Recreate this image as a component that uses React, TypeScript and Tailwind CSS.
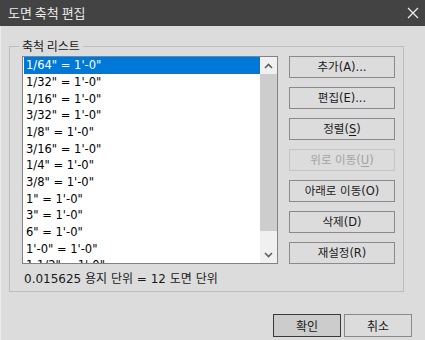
import React from "react";

const scales = [
  '1/64" = 1\'-0"',
  '1/32" = 1\'-0"',
  '1/16" = 1\'-0"',
  '3/32" = 1\'-0"',
  '1/8" = 1\'-0"',
  '3/16" = 1\'-0"',
  '1/4" = 1\'-0"',
  '3/8" = 1\'-0"',
  '1" = 1\'-0"',
  '3" = 1\'-0"',
  '6" = 1\'-0"',
  '1\'-0" = 1\'-0"',
  '1 1/2" = 1\'-0"',
];

const kr = { fontFamily: '"Noto Sans CJK KR", sans-serif' };
const lat = { fontFamily: '"DejaVu Sans", "Noto Sans CJK KR", sans-serif' };

function Btn({ children, disabled }: { children: React.ReactNode; disabled?: boolean }) {
  return (
    <div
      className={
        "h-[22px] w-[106px] flex items-center justify-center border text-[11.5px] leading-[16px] " +
        (disabled ? "border-[#c4c4c4] text-[#a3a3a3]" : "border-[#8a8a8a] text-[#1a1a1a]")
      }
      style={lat}
    >
      {children}
    </div>
  );
}

export default function App() {
  return (
    <div className="w-[425px] h-[340px] bg-[#dcdcdc] flex flex-col overflow-hidden" style={kr}>
      <div className="h-[26px] bg-[#434343] flex items-center justify-between pl-[8px] pr-[5px] shrink-0">
        <span className="text-[13px] leading-[18px] text-[#e8e8e8]" style={kr}>도면 축척 편집</span>
        <svg width="12" height="12" viewBox="0 0 12 12" className="mr-[1px]">
          <path d="M1 1 L11 11 M11 1 L1 11" stroke="#f0f0f0" strokeWidth="1.2" />
        </svg>
      </div>
      <div className="flex-1 flex flex-col border-l border-[#ececec]">
        <div className="relative ml-[8px] mt-[20px] w-[395px] h-[246px] border border-[#bdbdbd] pl-[12px] pt-[9px] shrink-0">
          <span className="absolute left-[9px] top-[-9px] bg-[#dcdcdc] px-[3px] text-[12px] leading-[16px] text-[#1a1a1a]" style={kr}>
            축척 리스트
          </span>
          <div className="flex">
            <div className="w-[256px] h-[208px] border border-[#828282] bg-white flex overflow-hidden">
              <div className="flex-1 flex flex-col pl-[1px] overflow-hidden">
                {scales.map((s, i) => (
                  <div
                    key={i}
                    className={
                      "h-[16.67px] shrink-0 flex items-center pl-[2px] text-[11.5px] leading-[16px] " +
                      (i === 0 ? "bg-[#0078d7] text-white" : "text-black")
                    }
                    style={lat}
                  >
                    {s}
                  </div>
                ))}
              </div>
              <div className="w-[17px] bg-[#f0f0f0] flex flex-col shrink-0">
                <div className="h-[17px] flex items-center justify-center shrink-0">
                  <svg width="9" height="6" viewBox="0 0 9 6">
                    <path d="M1 5 L4.5 1.5 L8 5" stroke="#606060" strokeWidth="1.6" fill="none" />
                  </svg>
                </div>
                <div className="h-[157px] bg-[#cdcdcd] shrink-0" />
                <div className="flex-1" />
                <div className="h-[17px] flex items-center justify-center shrink-0">
                  <svg width="9" height="6" viewBox="0 0 9 6">
                    <path d="M1 1 L4.5 4.5 L8 1" stroke="#606060" strokeWidth="1.6" fill="none" />
                  </svg>
                </div>
              </div>
            </div>
            <div className="ml-[11px] flex flex-col gap-[9px]">
              <Btn>추가(A)...</Btn>
              <Btn>편집(E)...</Btn>
              <Btn>
                정렬(<span className="underline underline-offset-2">S</span>)
              </Btn>
              <Btn disabled>
                위로 이동(<span className="underline underline-offset-2">U</span>)
              </Btn>
              <Btn>아래로 이동(O)</Btn>
              <Btn>삭제(D)</Btn>
              <Btn>재설정(R)</Btn>
            </div>
          </div>
          <div className="mt-[7px] pl-[2px] text-[12px] leading-[16px] text-[#1a1a1a]" style={lat}>
            0.015625 용지 단위 = 12 도면 단위
          </div>
        </div>
        <div className="flex justify-end gap-[3px] pr-[13px] mt-[22px]">
          <div className="w-[68px] h-[23px] border border-[#3a3a3a] bg-[#cccccc] flex items-center justify-center text-[12px] text-[#1a1a1a]" style={kr}>
            확인
          </div>
          <div className="w-[68px] h-[23px] border border-[#8a8a8a] flex items-center justify-center text-[12px] text-[#1a1a1a]" style={kr}>
            취소
          </div>
        </div>
      </div>
    </div>
  );
}
